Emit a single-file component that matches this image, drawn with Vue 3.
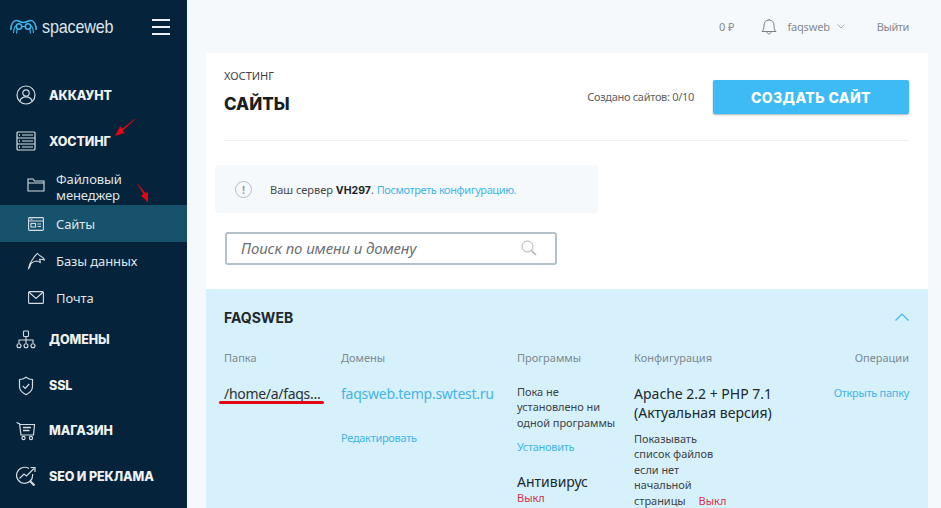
<script setup>
const subItems = [
  { key: 'files', label: 'Файловый менеджер' },
  { key: 'sites', label: 'Сайты', active: true },
  { key: 'db', label: 'Базы данных' },
  { key: 'mail', label: 'Почта' },
]
</script>

<template>
  <div class="app">
    <aside class="side">
      <div class="brand">
        <svg class="logo" width="27" height="15" viewBox="0 0 27 15" fill="none" stroke="#3fb6ea" stroke-width="1.600">
          <path d="M.8 11C1 5 3.500 1.500 6.500 1.500c2.500 0 3 2 7 2s4.500-2 7-2c3 0 5.500 3.500 5.700 9.500" />
          <circle cx="9" cy="7.500" r="2.700" />
          <circle cx="18" cy="7.500" r="2.700" />
          <path d="M3.500 14c0-3 .5-5 2-7.500M6.500 14.500c0-2 .3-3 1-4.500M23.500 14c0-3-.5-5-2-7.500M20.500 14.500c0-2-.3-3-1-4.500M11.700 7.500h3.600" stroke-width="1.100" />
        </svg>
        <span class="brand-name">spaceweb</span>
        <span class="burger"><i></i><i></i><i></i></span>
      </div>

      <nav class="nav">
        <a class="top t-account">
          <svg viewBox="0 0 20 20" width="20" height="20" fill="none" stroke="#d5dde2" stroke-width="1.2">
            <circle cx="10" cy="10" r="9" />
            <circle cx="10" cy="8" r="3.200" />
            <path d="M4 16c.8-3 3-4.200 6-4.200s5.200 1.200 6 4.200" />
          </svg>
          <span>АККАУНТ</span>
        </a>
        <a class="top t-host">
          <svg viewBox="0 0 20 20" width="20" height="20" fill="none" stroke="#d5dde2" stroke-width="1.200">
            <rect x="1" y="1" width="18" height="18" rx="1" />
            <path d="M1 7h18M1 13h18M6 4h11M6 10h11M6 16h11" />
            <path d="M3 4h1M3 10h1M3 16h1" stroke-width="1.600" />
          </svg>
          <span>ХОСТИНГ</span>
        </a>
        <div class="subs">
          <a v-for="item in subItems" :key="item.key" class="sub" :class="[{ active: item.active }, 's-' + item.key]">
            <svg v-if="item.key === 'files'" viewBox="0 0 18 14" width="18" height="14" fill="none" stroke="#d5dde2" stroke-width="1.100">
              <path d="M1 13V1h5l1.500 2H17v10zM1 5h16" />
            </svg>
            <svg v-else-if="item.key === 'sites'" viewBox="0 0 16 14" width="16" height="14" fill="none" stroke="#d5dde2" stroke-width="1.100">
              <rect x=".6" y=".6" width="14.800" height="12.800" rx=".8" />
              <path d="M.6 4h14.800M2.500 2.300h2" />
              <rect x="3" y="6.500" width="4.500" height="3.500" />
              <path d="M9.500 7h3.500M9.500 9.500h3.500" />
            </svg>
            <svg v-else-if="item.key === 'db'" viewBox="0 0 18 18" width="18" height="18" fill="none" stroke="#d5dde2" stroke-width="1.100">
              <path d="M1.500 16.500c.3-3 1.500-5.500 3-7.500C6.500 6 8 3 10.500 1.500c1 1.200 3 2.700 4.500 3.500 1 .5 2 1.500 2.500 3-2-.7-3.500-1-5-.7.5 1 1 2 .7 3.200-1-.8-2.200-1.500-3.700-1.500C6 9.500 3.500 12 3 14c0 1-.5 1.800-1.500 2.500z" />
            </svg>
            <svg v-else viewBox="0 0 16 13" width="16" height="13" fill="none" stroke="#d5dde2" stroke-width="1.100">
              <rect x=".6" y=".6" width="14.800" height="11.800" rx="1" />
              <path d="M.8 1l7.200 6.500L15.200 1" />
            </svg>
            <span>{{ item.label }}</span>
          </a>
        </div>
        <a class="top t-domains">
          <svg viewBox="0 0 20 20" width="20" height="20" fill="none" stroke="#d5dde2" stroke-width="1.100">
            <rect x="7.500" y="1" width="5" height="5.500" rx=".8" />
            <path d="M10 6.500V13M3 13v-3h14v3" />
            <circle cx="3" cy="15.800" r="2" />
            <circle cx="10" cy="15.800" r="2" />
            <circle cx="17" cy="15.800" r="2" />
          </svg>
          <span>ДОМЕНЫ</span>
        </a>
        <a class="top t-ssl">
          <svg viewBox="0 0 20 20" width="20" height="20" fill="none" stroke="#d5dde2" stroke-width="1.200">
            <path d="M10 1.200c2 1.500 4.500 2.300 6.500 2.300v7c0 4-3 6.500-6.500 8.200-3.500-1.700-6.500-4.200-6.500-8.200v-7c2 0 4.500-.8 6.500-2.300z" />
            <path d="M6.800 10l2.400 2.400 4-4.400" />
          </svg>
          <span>SSL</span>
        </a>
        <a class="top t-shop">
          <svg viewBox="0 0 20 20" width="20" height="20" fill="none" stroke="#d5dde2" stroke-width="1.200">
            <path d="M.5 1.500l3 1.200L5 14h12.500l1-10.500H4" />
            <path d="M7 6.500h8M7 9.500h6.500" stroke-width="1.600" />
            <circle cx="7.500" cy="17" r="1.600" />
            <circle cx="15" cy="17" r="1.600" />
          </svg>
          <span>МАГАЗИН</span>
        </a>
        <a class="top t-seo">
          <svg viewBox="0 0 20 20" width="20" height="20" fill="none" stroke="#d5dde2" stroke-width="1.200">
            <path d="M13 2.600A8 8 0 1 0 16.500 8" />
            <path d="M3.500 12.500L8 8l2.500 2L18 2.500M14.500 1.500H19V6" />
            <path d="M14 15l4.500 4.500" stroke-width="2.200" />
          </svg>
          <span>SEO И РЕКЛАМА</span>
        </a>
      </nav>
    </aside>

    <main class="main">
      <header class="bar">
        <span class="balance">0 ₽</span>
        <svg class="bell" width="16" height="17" viewBox="0 0 16 17" fill="none" stroke="#7b7f82" stroke-width="1">
          <path d="M1 13.500c1.500-1.500 2-3 2-6C3 4 5 2 8 2s5 2 5 5.500c0 3 .5 4.500 2 6zM8 2V.8M6 13.500c0 1.500 1 2.500 2 2.500s2-1 2-2.500" />
        </svg>
        <span class="user">faqsweb</span>
        <svg class="caret" width="8" height="5" viewBox="0 0 8 5" fill="none" stroke="#a9adb0" stroke-width="1"><path d="M.5.500L4 4 7.500.500" /></svg>
        <span class="logout">Выйти</span>
      </header>

      <section class="card">
        <div class="head">
          <div class="titles">
            <div class="crumb">ХОСТИНГ</div>
            <h1>САЙТЫ</h1>
          </div>
          <span class="count">Создано сайтов: 0/10</span>
          <button class="create">СОЗДАТЬ САЙТ</button>
        </div>

        <div class="notice">
          <span class="excl">!</span>
          <span>Ваш сервер <b>VH297</b>. <a class="link">Посмотреть конфигурацию.</a></span>
        </div>

        <div class="search">
          <span class="ph">Поиск по имени и домену</span>
          <svg width="16" height="16" viewBox="0 0 16 16" fill="none" stroke="#a8b0b5" stroke-width="1">
            <circle cx="6.500" cy="6.500" r="5.500" />
            <path d="M10.500 10.500L15 15" stroke-width="1.500" />
          </svg>
        </div>

        <div class="panel">
          <div class="panel-head">
            <span class="site">FAQSWEB</span>
            <svg width="14" height="8" viewBox="0 0 14 8" fill="none" stroke="#45b7e6" stroke-width="1.200"><path d="M.5 7.500L7 1l6.500 6.500" /></svg>
          </div>
          <div class="cols">
            <div class="c-folder">
              <div class="th">Папка</div>
              <div class="folder">/home/a/faqs...</div>
            </div>
            <div class="c-domain">
              <div class="th">Домены</div>
              <a class="domain">faqsweb.temp.swtest.ru</a>
              <a class="link edit">Редактировать</a>
            </div>
            <div class="c-prog">
              <div class="th">Программы</div>
              <p class="small">Пока не установлено ни одной программы</p>
              <a class="link install">Установить</a>
              <div class="big av">Антивирус</div>
              <div class="off">Выкл</div>
            </div>
            <div class="c-conf">
              <div class="th">Конфигурация</div>
              <div class="big conf">Apache 2.2 + PHP 7.1<br />(Актуальная версия)</div>
              <div class="listing">
                <p class="small">Показывать список файлов если нет начальной</p>
                <div class="last">
                  <span class="small">страницы</span>
                  <span class="off">Выкл</span>
                </div>
              </div>
            </div>
            <div class="c-ops">
              <div class="th">Операции</div>
              <a class="link">Открыть папку</a>
            </div>
          </div>
        </div>
      </section>
    </main>

    <svg class="mark m1" width="22" height="20" viewBox="0 0 22 20"><path d="M20.500 1L8.500 10.500 6 8.500 1 18l9.500-3-1.500-2.500L21 1.500z" fill="#e30613" /></svg>
    <svg class="mark m2" width="14" height="21" viewBox="0 0 14 21"><path d="M1 .5L7.500 11 5 12.500l7 7V9l-2.500 1L1.500 .5z" fill="#e30613" /></svg>
    <span class="mark m3"></span>
  </div>
</template>

<style>
html, body { margin: 0; height: 100%; overflow: hidden; }
</style>

<style scoped>
.app {
  position: relative;
  display: flex;
  width: 941px;
  height: 508px;
  overflow: hidden;
  background: #f5f9fb;
  font-family: "Noto Sans", "Open Sans", sans-serif;
  color: #2b2f33;
}
.side {
  flex: 0 0 187px;
  background: #05233a;
  color: #e3e8ec;
}
.brand {
  display: flex;
  align-items: center;
  height: 53px;
  padding: 0 17px 0 10px;
}
.logo { margin-right: 5px; }
.brand-name {
  font-family: "Liberation Sans", sans-serif;
  font-size: 19px;
  color: #dfe5e9;
  letter-spacing: -.2px;
  transform: scaleX(.85);
  transform-origin: left;
}
.burger {
  display: flex;
  flex-direction: column;
  gap: 5px;
  margin-left: auto;
}
.burger i { display: block; width: 18px; height: 2px; background: #eef2f4; }
.nav { display: flex; flex-direction: column; }
.top {
  display: flex;
  align-items: center;
  gap: 13px;
  height: 46px;
  padding-left: 16px;
  font-family: Inter, sans-serif;
  font-weight: 800;
  font-size: 12.500px;
  letter-spacing: -.1px;
  color: #eef2f4;
}
.t-account { margin-top: 19px; }
.subs { display: flex; flex-direction: column; }
.sub {
  display: flex;
  align-items: center;
  gap: 11px;
  height: 37px;
  padding-left: 27px;
  font-size: 13px;
  line-height: 16px;
  letter-spacing: -.1px;
  color: #dfe5e9;
}
.sub svg { flex: 0 0 auto; width: 18px; }
.s-files { box-sizing: border-box; height: 41px; padding-top: 4px; }
.s-files svg { margin-top: -4px; }
.s-files span { width: 80px; }
.s-sites.active { background: #17526c; }
.t-domains { height: 47px; }
.t-ssl { height: 45px; }
.t-shop { height: 45px; }
.main {
  flex: 1;
  min-width: 0;
  padding: 0 13px 0 19px;
}
.bar {
  display: flex;
  align-items: center;
  height: 53px;
  padding-right: 19px;
  justify-content: flex-end;
  font-size: 11px;
  color: #85898c;
}
.balance { margin-right: 26px; }
.user { margin: 0 7px 0 11px; letter-spacing: -.2px; }
.caret { margin-right: 32px; }
.logout { letter-spacing: -.4px; }
.card {
  background: #fff;
  height: 455px;
  overflow: hidden;
}
.head {
  display: flex;
  align-items: flex-start;
  margin: 0 19px 0 18px;
  height: 87px;
  border-bottom: 1px solid #eef1f3;
}
.titles { flex: 1; }
.crumb { margin-top: 15px; font-size: 11px; line-height: 16px; color: #3f4346; }
h1 {
  margin: 9px 0 0;
  font-family: Inter, sans-serif;
  font-size: 17px;
  line-height: 22px;
  font-weight: 800;
  color: #1a1e21;
}
.count { margin: 36px 19px 0 0; font-size: 11px; line-height: 16px; letter-spacing: -.3px; color: #5c6165; }
.create {
  width: 196px;
  height: 34px;
  margin-top: 27px;
  border: 0;
  border-radius: 2px;
  background: #3dbbf5;
  box-shadow: 0 1px 2px rgba(0, 40, 70, .35);
  color: #fff;
  font-family: Inter, sans-serif;
  font-size: 14px;
  font-weight: 800;
  letter-spacing: .4px;
}
.notice {
  display: flex;
  align-items: center;
  gap: 18px;
  width: 363px;
  height: 48px;
  margin: 24px 0 0 9px;
  padding-left: 20px;
  border-radius: 4px;
  background: #f5f9fb;
  font-size: 11px;
  color: #44484c;
}
.notice b { font-family: Inter, sans-serif; font-size: 10.500px; font-weight: 700; color: #1f2326; }
.notice .link { letter-spacing: -.4px; }
.excl {
  width: 15px;
  height: 15px;
  border: 1.500px solid #b6bcc0;
  border-radius: 50%;
  text-align: center;
  font-size: 11px;
  line-height: 15px;
  font-weight: 700;
  color: #9aa1a5;
}
.link { color: #45b4e8; font-size: 11px; letter-spacing: -.3px; }
.search {
  display: flex;
  align-items: center;
  justify-content: space-between;
  box-sizing: border-box;
  width: 332px;
  height: 33px;
  margin: 19px 0 0 19px;
  padding: 0 18px 2px 14px;
  border: 2px solid #b3c0c7;
  border-radius: 3px;
}
.ph { font-size: 15px; font-style: italic; letter-spacing: -.1px; color: #6a6f73; }
.panel {
  margin-top: 24px;
  height: 219px;
  padding: 0 19px 0 18px;
  background: #d6f1fc;
}
.panel-head {
  display: flex;
  align-items: center;
  justify-content: space-between;
  height: 56px;
}
.site { font-family: Inter, sans-serif; font-size: 14px; font-weight: 700; color: #20282e; }
.cols {
  display: grid;
  grid-template-columns: 117px 176px 117px 1fr auto;
  margin-top: 5px;
}
.th { font-size: 11px; line-height: 16px; color: #7d8a91; }
.folder { margin-top: 18px; font-size: 14px; line-height: 20px; letter-spacing: -.3px; color: #2b2f33; }
.domain { display: block; margin-top: 18px; font-size: 14px; line-height: 20px; letter-spacing: -.25px; color: #45b4e8; }
.edit { display: block; margin-top: 26px; }
.small { margin: 0; font-size: 11px; line-height: 15.400px; letter-spacing: -.05px; color: #3d4347; }
.c-prog .small { width: 100px; margin-top: 18px; }
.install { display: block; margin-top: 9px; }
.big { font-size: 14px; line-height: 19px; color: #20282e; }
.av { margin-top: 19px; line-height: 17px; }
.off { font-size: 11px; line-height: 15px; color: #d5304f; }
.conf { margin-top: 18px; }
.listing { width: 80px; margin-top: 9px; }
.last { display: flex; gap: 13px; white-space: nowrap; }
.c-ops { text-align: right; }
.c-ops .th { margin-bottom: 19px; }
.c-ops .link { display: block; }
.mark { position: absolute; }
.m1 { left: 114px; top: 118px; }
.m2 { left: 136px; top: 183px; }
.m3 {
  left: 219px;
  top: 401px;
  width: 105px;
  height: 3px;
  border-radius: 2px;
  background: #e30613;
}
</style>
